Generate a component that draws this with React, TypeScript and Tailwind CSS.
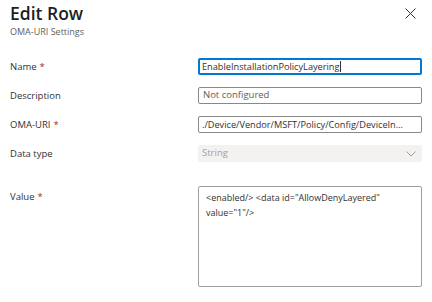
import React from 'react';

function Label({ text, required }: { text: string; required?: boolean }) {
  return (
    <div className="text-[9.5px] text-[#323130] leading-none">
      {text}
      {required && <span className="text-[#a4262c] ml-[3px]">*</span>}
    </div>
  );
}

export default function App() {
  return (
    <div className="w-[432px] h-[302px] bg-white font-['Segoe_UI','Open_Sans',sans-serif] overflow-hidden">
      <div className="flex justify-between pl-[10px] pr-[16px] pt-[1px]">
        <div>
          <h1 className="text-[17.5px] leading-[24px] font-semibold text-[#201f1e]">Edit Row</h1>
          <p className="text-[9px] leading-[12px] text-[#605e5c] mt-[1px]">OMA-URI Settings</p>
        </div>
        <button className="mt-[7px] h-[11px] text-[#323130] flex">
          <svg className="block" width="11" height="11" viewBox="0 0 11 11" fill="none" stroke="currentColor" strokeWidth="1">
            <path d="M0.5 0.5L10.5 10.5M10.5 0.5L0.5 10.5" />
          </svg>
        </button>
      </div>

      <div className="mt-[20px] pl-[10px] pr-[10px] flex flex-col gap-[12px]">
        <div className="grid grid-cols-[188px_224px] items-center h-[17px]">
          <Label text="Name" required />
          <div className="h-[17px] border-2 border-[#0078d4] rounded-[2px] flex items-center px-[2px] text-[9.2px] text-[#323130]">
            EnableInstallationPolicyLayering<span className="w-px h-[11px] bg-[#323130] ml-px" />
          </div>
        </div>
        <div className="grid grid-cols-[188px_224px] items-center h-[17px]">
          <Label text="Description" />
          <div className="h-[17px] border border-[#8a8886] rounded-[2px] flex items-center px-[4px] text-[9.5px] text-[#605e5c]">
            Not configured
          </div>
        </div>
        <div className="grid grid-cols-[188px_224px] items-center h-[17px]">
          <Label text="OMA-URI" required />
          <div className="h-[17px] border border-[#8a8886] rounded-[2px] flex items-center px-[3px] text-[9.2px] text-[#323130] whitespace-nowrap overflow-hidden">
            ./Device/Vendor/MSFT/Policy/Config/DeviceIn...
          </div>
        </div>
        <div className="grid grid-cols-[188px_224px] items-center h-[17px]">
          <Label text="Data type" />
          <div className="h-[17px] bg-[#f3f2f1] rounded-[2px] flex items-center justify-between pl-[4px] pr-[6px] text-[9.5px] text-[#a19f9d]">
            String
            <svg width="10" height="6" viewBox="0 0 10 6" fill="none" stroke="#a19f9d" strokeWidth="1">
              <path d="M0.5 0.5L5 5L9.5 0.5" />
            </svg>
          </div>
        </div>
        <div className="grid grid-cols-[188px_224px] items-start mt-[12px]">
          <div className="pt-[6px]">
            <Label text="Value" required />
          </div>
          <div className="h-[101px] border border-[#a19f9d] rounded-[2px] px-[7px] pt-[3px] text-[9px] leading-[15px] text-[#323130]">
            &lt;enabled/&gt; &lt;data id="AllowDenyLayered"
            <br />
            value="1"/&gt;
          </div>
        </div>
      </div>
    </div>
  );
}
